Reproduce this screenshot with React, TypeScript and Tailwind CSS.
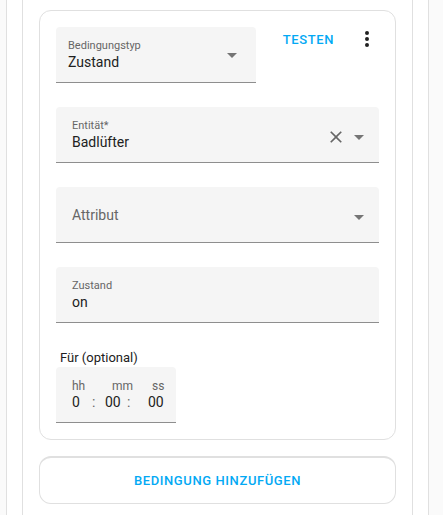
import React from 'react';

const MenuDown = ({ className = '' }: { className?: string }) => (
  <svg className={className} viewBox="0 0 24 24" fill="currentColor">
    <path d="M7,10L12,15L17,10H7Z" />
  </svg>
);

const Close = ({ className = '' }: { className?: string }) => (
  <svg className={className} viewBox="0 0 24 24" fill="currentColor">
    <path d="M19,6.41L17.59,5L12,10.59L6.41,5L5,6.41L10.59,12L5,17.59L6.41,19L12,13.41L17.59,19L19,17.59L13.41,12L19,6.41Z" />
  </svg>
);

const DotsVertical = ({ className = '' }: { className?: string }) => (
  <svg className={className} viewBox="0 0 24 24" fill="currentColor">
    <path d="M12,16A2,2 0 0,1 14,18A2,2 0 0,1 12,20A2,2 0 0,1 10,18A2,2 0 0,1 12,16M12,10A2,2 0 0,1 14,12A2,2 0 0,1 12,14A2,2 0 0,1 10,12A2,2 0 0,1 12,10M12,4A2,2 0 0,1 14,6A2,2 0 0,1 12,8A2,2 0 0,1 10,6A2,2 0 0,1 12,4Z" />
  </svg>
);

const Field = ({
  label,
  value,
  pad = 'px-4',
  children,
}: {
  label: string;
  value: string;
  pad?: string;
  children?: React.ReactNode;
}) => (
  <div className={`relative h-[56px] rounded-t-[4px] bg-[#f5f5f5] border-b border-[#8e8e8e] ${pad} pt-[13px] flex`}>
    <div className="flex-1">
      <div className="text-[11px] leading-[12px] text-[#666666]">{label}</div>
      <div className="text-[14px] leading-[20px] text-[#212121]">{value}</div>
    </div>
    {children}
  </div>
);

export default function App() {
  return (
    <div
      className="h-[515px] overflow-hidden bg-[#fafafa] pl-[6px]"
      style={{ fontFamily: 'Roboto, "Noto Sans", sans-serif' }}
    >
      <div className="h-full w-[423px] border-x border-[#e0e0e0] bg-white px-[15px]">
        <div className="h-full border-x border-[#e0e0e0] px-4 pt-[10px]">
          {/* condition card */}
          <div className="rounded-[12px] border border-[#e0e0e0] p-4">
            <div className="flex items-start">
              <div className="w-[200px]">
                <Field label="Bedingungstyp" value="Zustand" pad="pl-3 pr-3">
                  <MenuDown className="mt-[3px] h-6 w-6 text-[#757575]" />
                </Field>
              </div>
              <div className="flex h-[26px] flex-1 items-center justify-end">
                <span className="mr-[21px] text-[13px] font-medium tracking-[0.6px] text-[#03a9f4]">TESTEN</span>
                <DotsVertical className="-mt-[2px] h-6 w-6 text-[#212121]" />
              </div>
            </div>

            <div className="mt-6">
              <Field label="Entität*" value="Badlüfter" pad="pl-4 pr-[8px]">
                <div className="mt-[5px] flex h-6 items-center">
                  <Close className="mr-[1px] h-5 w-5 text-[#666666]" />
                  <MenuDown className="h-6 w-6 text-[#757575]" />
                </div>
              </Field>
            </div>

            <div className="mt-6 flex h-[56px] items-center rounded-t-[4px] border-b border-[#8e8e8e] bg-[#f5f5f5] pl-4 pr-[8px]">
              <span className="flex-1 text-[14px] leading-[24px] text-[#666666]">Attribut</span>
              <MenuDown className="mt-[4px] h-6 w-6 text-[#757575]" />
            </div>

            <div className="mt-6">
              <Field label="Zustand" value="on" />
            </div>

            <div className="mt-[26px] pl-1 text-[13px] leading-[18px] text-[#212121]">Für (optional)</div>
            <div className="h-[56px] w-[120px] rounded-t-[4px] border-b border-[#8e8e8e] bg-[#f5f5f5] pl-4 pt-[13px]">
              <div className="flex text-[12px] leading-[12px] text-[#666666]">
                <span className="w-[40px]">hh</span>
                <span className="w-[40px]">mm</span>
                <span>ss</span>
              </div>
              <div className="flex text-[14px] leading-[20px] text-[#212121]">
                <span className="w-[20px]">0</span>
                <span className="w-[13px] text-[#666666]">:</span>
                <span className="w-[22px]">00</span>
                <span className="w-[21px] text-[#666666]">:</span>
                <span>00</span>
              </div>
            </div>
          </div>

          {/* add condition */}
          <div className="mt-4 flex h-[48px] items-center justify-center rounded-[12px] border border-t-2 border-[#e0e0e0]">
            <span className="text-[13px] font-medium tracking-[0.6px] text-[#03a9f4]">BEDINGUNG HINZUFÜGEN</span>
          </div>
        </div>
      </div>
    </div>
  );
}
